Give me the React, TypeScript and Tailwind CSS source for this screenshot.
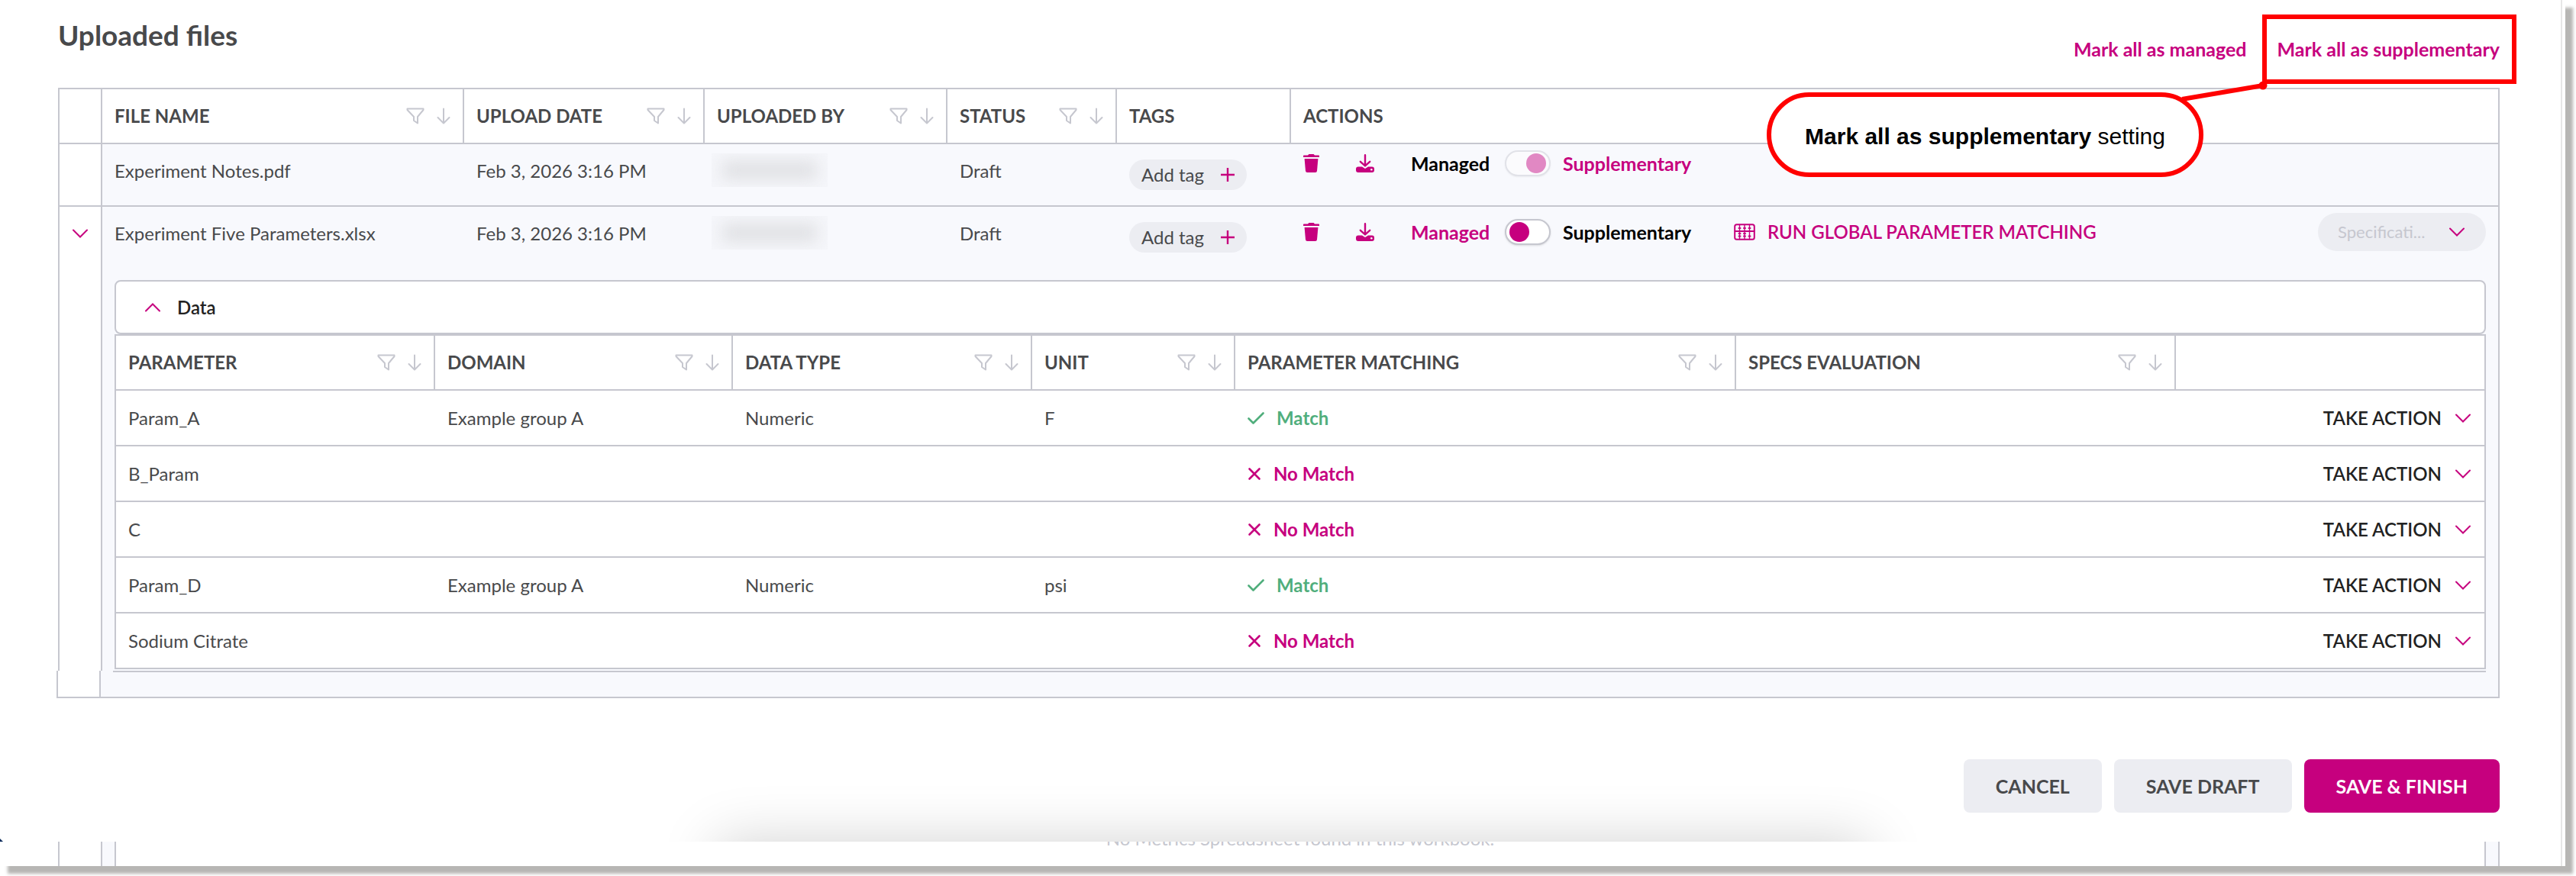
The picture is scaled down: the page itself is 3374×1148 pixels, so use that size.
import { useState } from "react";

const fileColumns = [
  { label: "FILE NAME", sortable: true, width: "w-[474px]" },
  { label: "UPLOAD DATE", sortable: true, width: "w-[315px]" },
  { label: "UPLOADED BY", sortable: true, width: "w-[318px]" },
  { label: "STATUS", sortable: true, width: "w-[222px]" },
  { label: "TAGS", sortable: false, width: "w-[228px]" },
  { label: "ACTIONS", sortable: false, width: "" },
];

const paramColumns = [
  { label: "PARAMETER", sortable: true, width: "w-[418px]" },
  { label: "DOMAIN", sortable: true, width: "w-[390px]" },
  { label: "DATA TYPE", sortable: true, width: "w-[392px]" },
  { label: "UNIT", sortable: true, width: "w-[266px]" },
  { label: "PARAMETER MATCHING", sortable: true, width: "w-[656px]" },
  { label: "SPECS EVALUATION", sortable: true, width: "w-[576px]" },
  { label: "", sortable: false, width: "" },
];

const params = [
  { name: "Param_A", domain: "Example group A", type: "Numeric", unit: "F", match: true },
  { name: "B_Param", domain: "", type: "", unit: "", match: false },
  { name: "C", domain: "", type: "", unit: "", match: false },
  { name: "Param_D", domain: "Example group A", type: "Numeric", unit: "psi", match: true },
  { name: "Sodium Citrate", domain: "", type: "", unit: "", match: false },
];

function Chevron({ up = false }: { up?: boolean }) {
  return (
    <svg
      className={`h-3 w-5 shrink-0 ${up ? "rotate-180" : ""}`}
      viewBox="0 0 20 12"
      fill="none"
      stroke="#c6007e"
      strokeWidth="2"
      aria-hidden="true"
    >
      <path d="M1 1.5 L10 10.5 L19 1.5" strokeLinecap="round" />
    </svg>
  );
}

function FilterIcon() {
  return (
    <svg className="h-[22px] w-6" viewBox="0 0 24 22" fill="none" stroke="#c6c7cf" strokeWidth="2" strokeLinejoin="round" aria-hidden="true">
      <path d="M1.5 1.5 H22.5 V3 L15 12 V20.5 L10 17 V12 L1.5 3 Z" />
    </svg>
  );
}

function SortIcon() {
  return (
    <svg className="h-[22px] w-[18px]" viewBox="0 0 18 22" fill="none" stroke="#c6c7cf" strokeWidth="2" strokeLinecap="round" strokeLinejoin="round" aria-hidden="true">
      <path d="M9 1.5 V20 M1.5 13 L9 20.5 L16.5 13" />
    </svg>
  );
}

function TrashIcon() {
  return (
    <svg className="h-6 w-[21px]" viewBox="0 0 21 24" fill="#c6007e" aria-hidden="true">
      <path d="M0.8 1.6 H6 L7.4 0 H13.6 L15 1.6 H20.2 Q21 1.6 21 2.4 V4 H0 V2.4 Q0 1.6 0.8 1.6 Z" />
      <path d="M1.6 6 H19.4 L18 22 Q17.8 24 15.8 24 H5.2 Q3.2 24 3 22 Z" />
    </svg>
  );
}

function DownloadIcon() {
  return (
    <svg className="size-6" viewBox="0 0 24 24" fill="none" aria-hidden="true">
      <path d="M12 1.2 V15 M5.8 9.8 L12 15.4 L18.2 9.8" stroke="#c6007e" strokeWidth="2.4" strokeLinecap="round" strokeLinejoin="round" />
      <path d="M3 16.5 H8 L12 19 L16 16.5 H21 Q24 16.5 24 19.5 V21 Q24 24 21 24 H3 Q0 24 0 21 V19.5 Q0 16.5 3 16.5 Z" fill="#c6007e" />
      <circle cx="20.3" cy="20.3" r="1.3" fill="#f8f9fd" />
    </svg>
  );
}

function AbacusIcon() {
  return (
    <svg className="h-[22px] w-7" viewBox="0 0 28 22" fill="none" stroke="#c6007e" strokeWidth="2" strokeLinecap="round" aria-hidden="true">
      <rect x="1.2" y="1.2" width="25.6" height="19.6" rx="2.5" />
      <path d="M1.5 10 H26.5" />
      <path d="M7.5 1.5 V20.5 M14 1.5 V20.5 M20.5 1.5 V20.5" strokeWidth="1.4" />
      <path d="M6.5 6 H8.5 M13 6 H15 M19.5 6 H21.5 M6.5 13 H8.5 M6.5 16.5 H8.5 M13 13 H15 M13 16.5 H15 M19.5 16.5 H21.5" />
    </svg>
  );
}

function HeaderCell({ label, sortable }: { label: string; sortable: boolean }) {
  return (
    <th scope="col" className="h-[72px] border-t-2 border-l-2 border-[#c6c7cf] bg-white px-4 text-left font-bold">
      <div className="flex items-center justify-between">
        <span>{label}</span>
        {sortable && (
          <span className="flex items-center gap-4">
            <button type="button" aria-label={`Filter ${label}`}>
              <FilterIcon />
            </button>
            <button type="button" aria-label={`Sort ${label}`}>
              <SortIcon />
            </button>
          </span>
        )}
      </div>
    </th>
  );
}

function AddTag() {
  return (
    <button type="button" className="flex h-10 w-[154px] items-center justify-between rounded-full bg-[#ecedf2] px-4">
      Add tag
      <svg className="size-[18px]" viewBox="0 0 18 18" stroke="#c6007e" strokeWidth="2.4" aria-hidden="true">
        <path d="M9 0 V18 M0 9 H18" />
      </svg>
    </button>
  );
}

function RedactedName() {
  return (
    <div className="flex h-11 w-[152px] items-center justify-center overflow-hidden bg-[#f5f6fa]">
      <div className="h-6 w-[124px] rounded bg-[#e0e1e4] blur-[10px]" />
    </div>
  );
}

interface FileActionsProps {
  id: string;
  supplementary: boolean;
  locked?: boolean;
  onToggle?: () => void;
}

function FileActions({ id, supplementary, locked = false, onToggle }: FileActionsProps) {
  return (
    <>
      <button type="button" aria-label="Delete file">
        <TrashIcon />
      </button>
      <button type="button" aria-label="Download file" className="ml-12">
        <DownloadIcon />
      </button>
      <div className="ml-12 flex items-center gap-4 text-[25px] font-bold">
        <span className={`w-[107px] ${supplementary ? "text-black" : "text-[#c6007e]"}`}>Managed</span>
        <input
          id={id}
          type="checkbox"
          role="switch"
          checked={supplementary}
          disabled={locked}
          onChange={() => onToggle?.()}
          className="h-[34px] w-[60px] shrink-0 appearance-none rounded-full border-2 border-[#c6c7cf] bg-white px-1 py-0.5 shadow-sm before:block before:size-[26px] before:rounded-full before:bg-[#c6007e] checked:before:ml-[22px] disabled:opacity-45"
        />
        <label htmlFor={id} className={`w-44 ${supplementary ? "text-[#c6007e]" : "text-black"}`}>
          Supplementary
        </label>
      </div>
    </>
  );
}

function ParameterTable() {
  return (
    <table className="w-full table-fixed border-separate border-spacing-0 border-r-2 border-b-2 border-[#c6c7cf] bg-white">
      <colgroup>
        {paramColumns.map((col, i) => (
          <col key={i} className={col.width} />
        ))}
      </colgroup>
      <thead>
        <tr>
          {paramColumns.map((col, i) => (
            <HeaderCell key={i} label={col.label} sortable={col.sortable} />
          ))}
        </tr>
      </thead>
      <tbody className="[&_td]:h-[73px] [&_td]:border-t-2 [&_td]:border-[#c6c7cf] [&_td]:pl-[18px]">
        {params.map((param) => (
          <tr key={param.name}>
            <td className="border-l-2 pl-4!">{param.name}</td>
            <td>{param.domain}</td>
            <td>{param.type}</td>
            <td>{param.unit}</td>
            <td>
              {param.match ? (
                <span className="flex items-center gap-4 font-bold text-[#50ae7c]">
                  <svg className="h-4 w-[22px]" viewBox="0 0 22 16" fill="none" stroke="currentColor" strokeWidth="2.6" strokeLinecap="round" strokeLinejoin="round" aria-hidden="true">
                    <path d="M1.5 8.5 L7.5 14.5 L20.5 1.5" />
                  </svg>
                  Match
                </span>
              ) : (
                <span className="flex items-center gap-4 font-bold text-[#c6007e]">
                  <svg className="size-[18px]" viewBox="0 0 18 18" stroke="currentColor" strokeWidth="2.6" strokeLinecap="round" aria-hidden="true">
                    <path d="M2.5 2.5 L15.5 15.5 M15.5 2.5 L2.5 15.5" />
                  </svg>
                  No Match
                </span>
              )}
            </td>
            <td></td>
            <td className="pr-[18px]">
              <button type="button" className="ml-auto flex items-center gap-[18px] font-semibold text-[#222222]">
                TAKE ACTION
                <Chevron />
              </button>
            </td>
          </tr>
        ))}
      </tbody>
    </table>
  );
}

export default function App() {
  const [supplementary, setSupplementary] = useState(false);

  return (
    <div className="bg-white pr-3.5 pb-3.5 font-['Lato',sans-serif] text-2xl leading-8 text-[#48494b]">
      <div className="relative bg-white pr-1 shadow-[10px_10px_4px_#b7b6b4]">
        <div className="border-r-2 border-[#e6e6e6]">
          <header className="flex items-start justify-between pt-6 pr-20 pb-[35px] pl-[76px]">
            <h1 className="text-[37px] leading-[44px] font-bold">Uploaded files</h1>
            <div className="flex gap-10 pt-6 text-[25px] font-bold text-[#c6007e]">
              <button type="button">Mark all as managed</button>
              <button type="button" className="relative" onClick={() => setSupplementary(true)}>
                Mark all as supplementary
                <span className="absolute -top-[29px] -right-[22px] -bottom-[30px] -left-5 border-[6px] border-[#ff0000]" />
              </button>
            </div>
          </header>

          <div className="pr-20 pl-[76px]">
            <table className="w-full table-fixed border-separate border-spacing-0 border-r-2 border-[#c6c7cf]">
              <colgroup>
                <col className="w-14" />
                {fileColumns.map((col) => (
                  <col key={col.label} className={col.width} />
                ))}
              </colgroup>
              <thead>
                <tr>
                  <th className="border-t-2 border-l-2 border-[#c6c7cf]"></th>
                  {fileColumns.map((col) => (
                    <HeaderCell key={col.label} label={col.label} sortable={col.sortable} />
                  ))}
                </tr>
              </thead>
              <tbody className="[&>tr>td]:border-[#c6c7cf] [&>tr>td]:align-top [&>tr>td:first-child]:border-l-2 [&>tr>td:nth-child(2)]:border-l-2 [&>tr>td:not(:first-child)]:bg-[#f8f9fd]">
                <tr className="[&>td]:h-[82px] [&>td]:border-t-2">
                  <td></td>
                  <td className="pt-[19px] pl-4">Experiment Notes.pdf</td>
                  <td className="pt-[19px] pl-[18px]">Feb 3, 2026 3:16 PM</td>
                  <td className="pt-3 pl-[11px]">
                    <RedactedName />
                  </td>
                  <td className="pt-[19px] pl-[18px]">Draft</td>
                  <td className="pt-5 pl-[18px]">
                    <AddTag />
                  </td>
                  <td className="pt-2 pl-[18px]">
                    <div className="flex items-center">
                      <FileActions id="supplementary-notes" supplementary locked />
                    </div>
                  </td>
                </tr>
                <tr className="[&>td]:h-[82px] [&>td]:border-t-2">
                  <td className="pt-[19px]">
                    <button type="button" aria-label="Collapse row" className="flex h-8 w-full items-center justify-center">
                      <Chevron />
                    </button>
                  </td>
                  <td className="pt-[19px] pl-4">Experiment Five Parameters.xlsx</td>
                  <td className="pt-[19px] pl-[18px]">Feb 3, 2026 3:16 PM</td>
                  <td className="pt-3 pl-[11px]">
                    <RedactedName />
                  </td>
                  <td className="pt-[19px] pl-[18px]">Draft</td>
                  <td className="pt-5 pl-[18px]">
                    <AddTag />
                  </td>
                  <td className="pt-2 pr-4 pl-[18px]">
                    <div className="flex items-center">
                      <FileActions
                        id="supplementary-parameters"
                        supplementary={supplementary}
                        onToggle={() => setSupplementary(!supplementary)}
                      />
                      <button type="button" className="ml-12 flex items-center gap-4 font-semibold text-[#c6007e]">
                        <AbacusIcon />
                        RUN GLOBAL PARAMETER MATCHING
                      </button>
                      <div className="relative ml-auto">
                        <select
                          aria-label="Specification"
                          disabled
                          className="block h-[50px] w-[220px] appearance-none rounded-full bg-[#ecedf2] pl-[26px] text-[22px] text-[#c6c7cf] opacity-100"
                        >
                          <option>Specificati...</option>
                        </select>
                        <span className="pointer-events-none absolute inset-y-0 right-7 flex items-center">
                          <Chevron />
                        </span>
                      </div>
                    </div>
                  </td>
                </tr>
                <tr>
                  <td></td>
                  <td colSpan={6} className="px-4 pt-4 pb-0.5">
                    <div className="flex h-[71px] items-center rounded-lg border-2 border-[#c6c7cf] bg-white pl-[38px]">
                      <button type="button" aria-expanded="true" className="flex items-center gap-[22px] font-semibold text-[#222222]">
                        <Chevron up />
                        Data
                      </button>
                    </div>
                    <ParameterTable />
                  </td>
                </tr>
              </tbody>
            </table>
          </div>

          <div className="flex pr-20 pl-[74px]">
            <div className="h-9 w-14 border-b-2 border-l-2 border-[#c6c7cf]" />
            <div className="h-9 flex-1 border-x-2 border-b-2 border-[#c6c7cf] bg-[#f8f9fd] px-4">
              <div className="border-t-2 border-[#c6c7cf]" />
            </div>
          </div>

          <footer className="relative overflow-hidden pt-20 pr-20 pb-[38px]">
            {/* top edge of the toast that sits below the footer */}
            <div className="absolute top-full right-[27%] left-[28%] h-40 shadow-[0_0_76px_rgba(0,0,0,0.18)]" />
            <svg className="absolute bottom-0 left-0 size-1" viewBox="0 0 4 4" fill="#0b2a5b" aria-hidden="true">
              <path d="M0 0 L4 4 H0 Z" />
            </svg>
            <div className="relative flex justify-end gap-4 text-[25px] font-bold [&>button]:h-[70px] [&>button]:rounded-lg [&>button]:px-[42px]">
              <button type="button" className="bg-[#ecedf2]">CANCEL</button>
              <button type="button" className="bg-[#ecedf2]">SAVE DRAFT</button>
              <button type="button" className="bg-[#c6007e] text-white">SAVE &amp; FINISH</button>
            </div>
          </footer>

          <div className="flex h-8 overflow-hidden pr-20 pl-[76px]">
            <div className="w-14 border-l-2 border-[#c6c7cf]" />
            <div className="flex-1 border-x-2 border-[#c6c7cf] bg-[#f8f9fd] px-4">
              <div className="h-8 overflow-hidden border-x-2 border-[#c6c7cf] bg-white text-center text-[#c6c7cf]">
                <p className="-mt-5">No Metrics Spreadsheet found in this workbook.</p>
              </div>
            </div>
          </div>
        </div>

        {/* callout */}
        <div className="absolute top-[121px] right-[474px] flex h-[111px] w-[572px] items-center justify-center rounded-full border-[6px] border-[#ff0000] bg-white pt-1 font-['Liberation_Sans',Arial,sans-serif] text-3xl text-black">
          <p>
            <strong className="font-bold">Mark all as supplementary</strong> setting
          </p>
        </div>
        <svg className="absolute top-[104px] right-[388px] h-9 w-[122px]" viewBox="0 0 122 36" aria-hidden="true">
          <path d="M8 26 L114 8" stroke="#ff0000" strokeWidth="6" />
          <circle cx="114" cy="8" r="5.5" fill="#ff0000" />
        </svg>
      </div>
    </div>
  );
}
